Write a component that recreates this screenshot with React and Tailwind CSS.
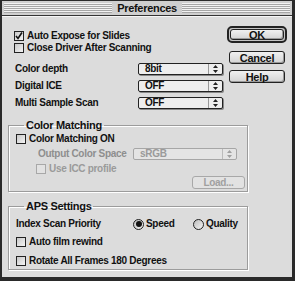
import React from 'react'

const font = "font-['Liberation_Sans',Arial,sans-serif] font-bold text-[10px] leading-[12px] tracking-[-0.3px]"

function Checkbox({ label, checked, disabled }) {
  return (
    <div className={`flex items-center h-[12px] gap-[3px] ${disabled ? 'text-[#9a9a9a]' : 'text-[#111]'}`}>
      <span
        className={`flex items-center justify-center w-[10px] h-[10px] border ${
          disabled ? 'border-[#a8a8a8] bg-[#e2e2e2]' : 'border-[#222] bg-[linear-gradient(135deg,#c8c8c8,#f4f4f4)]'
        }`}
      >
        {checked && (
          <svg width="8" height="8" viewBox="0 0 8 8">
            <path d="M1 4 L3 6.5 L7 0.5" stroke="#111" strokeWidth="1.6" fill="none" />
          </svg>
        )}
      </span>
      <span>{label}</span>
    </div>
  )
}

function Radio({ label, selected }) {
  return (
    <div className="flex items-center gap-[2px] h-[12px]">
      <span className="flex items-center justify-center w-[11px] h-[11px] rounded-full border border-[#222] bg-[linear-gradient(135deg,#bcbcbc,#f4f4f4)]">
        {selected && <span className="w-[6px] h-[6px] rounded-full bg-[#111]" />}
      </span>
      <span>{label}</span>
    </div>
  )
}

function Select({ value, width, disabled }) {
  return (
    <div
      className={`flex items-center h-[12px] rounded-[2px] border ${width} ${
        disabled ? 'border-[#a6a6a6] text-[#9a9a9a] bg-[#e4e4e4]' : 'border-[#222] bg-[#eeeeee] shadow-[1px_1px_0_#888]'
      }`}
    >
      <span className="flex-1 pl-[6px]">{value}</span>
      <span className={`flex items-center justify-center w-[14px] h-full border-l ${disabled ? 'border-[#bbb]' : 'border-[#999]'}`}>
        <svg width="5" height="8" viewBox="0 0 5 8">
          <path d="M2.5 0 L5 3 L0 3 Z M0 5 L5 5 L2.5 8 Z" fill={disabled ? '#a0a0a0' : '#222'} />
        </svg>
      </span>
    </div>
  )
}

function Button({ label, disabled, height = 'h-[13px]' }) {
  return (
    <div
      className={`flex items-center justify-center ${height} rounded-[3px] border ${
        disabled
          ? 'border-[#a8a8a8] text-[#a0a0a0] bg-[#e2e2e2]'
          : 'border-[#222] bg-[linear-gradient(#f0f0f0,#d4d4d4)] shadow-[inset_-1px_-1px_0_#999]'
      }`}
    >
      {label}
    </div>
  )
}

function Group({ title, children, className }) {
  return (
    <fieldset className={`ml-[6px] w-[240px] border border-[#9c9c9c] shadow-[1px_1px_0_#fff,inset_1px_1px_0_#fff] ${className}`}>
      <legend className="ml-[8px] px-[2px] text-[11px]">{title}</legend>
      {children}
    </fieldset>
  )
}

export default function App() {
  return (
    <div className={`w-[295px] h-[281px] bg-[#dcdcdc] border-l-2 border-t border-r-[3px] border-b-[4px] border-[#2a2a2a] flex flex-col text-[#111] ${font}`}>
      {/* Title bar */}
      <div className="relative h-[15px] flex items-center justify-center bg-[#cfcfcf] border-b border-[#333] px-[2px]">
        <div className="absolute left-[2px] right-[2px] top-[2px] bottom-[2px] bg-[repeating-linear-gradient(to_bottom,#f2f2f2_0,#f2f2f2_1px,#a6a6a6_1px,#a6a6a6_2px)]" />
        <span className="relative bg-[#cfcfcf] px-[5px] text-[11px]">Preferences</span>
      </div>

      {/* Top block */}
      <div className="flex border-t border-[#f6f6f6]">
        <div className="flex flex-col pl-[12px] pt-[13px] w-[221px]">
          <Checkbox label="Auto Expose for Slides" checked />
          <Checkbox label="Close Driver After Scanning" />
          <div className="flex flex-col gap-[5px] mt-[9px]">
            {[
              ['Color depth', '8bit'],
              ['Digital ICE', 'OFF'],
              ['Multi Sample Scan', 'OFF'],
            ].map(([l, v]) => (
              <div key={l} className="flex items-center">
                <span className="pl-[1px] w-[124px]">{l}</span>
                <Select value={v} width="w-[85px]" />
              </div>
            ))}
          </div>
        </div>
        <div className="flex flex-col pt-[9px] w-[60px] ml-[4px] text-[11px]">
          <div className="p-[1px] rounded-[5px] border-2 border-[#222] bg-[#c4c4c4]">
            <Button label="OK" height="h-[11px]" />
          </div>
          <div className="flex flex-col gap-[6px] mt-[8px] px-[2px]">
            <Button label="Cancel" />
            <Button label="Help" />
          </div>
        </div>
      </div>

      {/* Color Matching */}
      <Group title="Color Matching" className="mt-[10px] pb-[2px] pl-[7px]">
        <div className="mt-[2px]">
          <Checkbox label="Color Matching ON" />
        </div>
        <div className="flex items-center mt-[3px] text-[#8e8e8e]">
          <span className="pl-[22px] w-[117px]">Output Color Space</span>
          <Select value="sRGB" width="w-[104px]" disabled />
        </div>
        <div className="pl-[20px] mt-[3px]">
          <Checkbox label="Use ICC profile" disabled />
        </div>
        <div className="flex justify-end pr-[2px] mt-[1px]">
          <div className="w-[53px]">
            <Button label="Load..." disabled />
          </div>
        </div>
      </Group>

      {/* APS Settings */}
      <Group title="APS Settings" className="mt-[8px] pb-[2px] pl-[7px]">
        <div className="flex items-center mt-[6px]">
          <span className="w-[117px]">Index Scan Priority</span>
          <div className="w-[60px]">
            <Radio label="Speed" selected />
          </div>
          <Radio label="Quality" />
        </div>
        <div className="mt-[6px]">
          <Checkbox label="Auto film rewind" />
        </div>
        <div className="mt-[7px]">
          <Checkbox label="Rotate All Frames 180 Degrees" />
        </div>
      </Group>
    </div>
  )
}
